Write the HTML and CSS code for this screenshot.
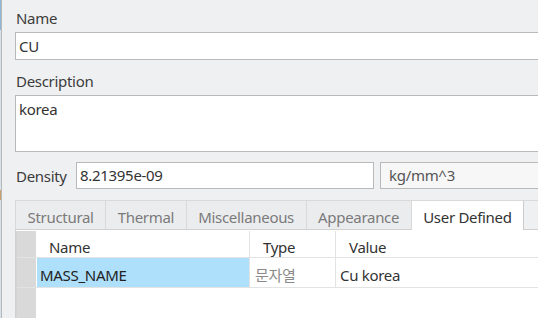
FILE: index.html
```html
<!DOCTYPE html>
<html lang="en">

<head>
  <meta charset="UTF-8">
  <title>Material</title>
  <link rel="stylesheet" href="styles.css">
</head>

<body>

  <div class="window">
    <div class="edge"></div>

    <div class="form">
      <div class="label">Name</div>
      <div class="field name-field">CU</div>

      <div class="label">Description</div>
      <div class="field desc-field">korea</div>

      <div class="density-row">
        <span class="density-label">Density</span>
        <div class="field density-field">8.21395e-09</div>
        <div class="field unit-field">kg/mm^3</div>
      </div>

      <div class="tabs">
        <div class="tab">Structural</div>
        <div class="tab">Thermal</div>
        <div class="tab">Miscellaneous</div>
        <div class="tab">Appearance</div>
        <div class="tab active">User Defined</div>
      </div>

      <div class="tab-body">
        <div class="grid">
          <div class="row head">
            <div class="corner"></div>
            <div class="cell col-name">Name</div>
            <div class="cell col-type">Type</div>
            <div class="cell col-value">Value</div>
          </div>
          <div class="row">
            <div class="corner"></div>
            <div class="cell col-name selected">MASS_NAME</div>
            <div class="cell col-type muted">문자열</div>
            <div class="cell col-value">Cu korea</div>
          </div>
          <div class="row filler">
            <div class="corner"></div>
            <div class="cell"></div>
          </div>
        </div>
      </div>
    </div>
  </div>

</body>

</html>
```

FILE: styles.css
```css
body {
  margin: 0;
  font-family: "Noto Sans", "Noto Sans CJK KR", sans-serif;
  font-size: 15px;
  letter-spacing: -0.3px;
  color: #333;
  background-color: #eff0f2;
}

.window {
  display: flex;
  height: 318px;
  overflow: hidden;
}

.edge {
  width: 1px;
  border-right: 1px solid #b8b8b8;
  background: linear-gradient(#8fb6d6 0 30px, #d7e3ec 30px 190px, #c8a26a 190px 200px, #d7e3ec 200px);
}

.form {
  flex: 1;
  display: flex;
  flex-direction: column;
  padding: 8px 0 0 13px;
  min-width: 0;
}

.label {
  height: 24px;
  line-height: 20px;
  padding-left: 1px;
  color: #3c3c3c;
}

.field {
  box-sizing: border-box;
  border: 1px solid #b9b9b9;
  background-color: #fff;
  padding: 0 3px;
  white-space: nowrap;
}

.name-field {
  height: 28px;
  line-height: 26px;
  margin: 0 -10px 11px 0;
}

.desc-field {
  height: 57px;
  line-height: 24px;
  padding-top: 1px;
  margin: 0 -10px 10px 0;
}

.density-row {
  display: flex;
  align-items: center;
  gap: 6px;
  margin-right: -10px;
}

.density-label {
  width: 54px;
  padding-left: 1px;
  color: #3c3c3c;
}

.density-field {
  width: 298px;
  height: 27px;
  line-height: 25px;
}

.unit-field {
  flex: 1;
  height: 27px;
  line-height: 25px;
  padding-left: 8px;
  background-color: #f7f7f7;
  color: #555;
}

.tabs {
  display: flex;
  box-sizing: border-box;
  height: 30px;
  margin: 11px -10px 0 0;
  border-top: 1px solid #d9d9d9;
  border-left: 1px solid #d9d9d9;
  border-bottom: 1px solid #d0d0d0;
}

.tab {
  box-sizing: border-box;
  height: 28px;
  line-height: 28px;
  padding: 2px 11.5px 0;
  color: #7a7a7a;
  border-right: 1px solid #d9d9d9;
  background-color: #ebecee;
}

.tab.active {
  height: 29px;
  margin-bottom: -1px;
  background-color: #fff;
  color: #333;
  border-right-color: #cccccc;
}

.tab-body {
  flex: 1;
  background-color: #fff;
  border-left: 1px solid #d0d0d0;
  padding-top: 1px;
  margin-right: -10px;
}

.grid {
  display: flex;
  flex-direction: column;
  height: 100%;
  border-left: 1px solid #d4d4d4;
}

.row {
  display: flex;
  height: 29px;
  border-bottom: 1px solid #e3e3e3;
}

.row.head {
  height: 26px;
}

.row.filler {
  flex: 1;
  border-bottom: none;
}

.corner {
  width: 19px;
  background-color: #d9d9d9;
  border-right: 1px solid #fff;
}

.cell {
  box-sizing: border-box;
  padding-top: 3px;
  line-height: 29px;
  white-space: nowrap;
  border-right: 1px solid #e3e3e3;
}

.head .cell {
  padding-top: 0;
  line-height: 33px;
}

.col-name {
  width: 213px;
  padding-left: 3px;
}

.head .col-name {
  padding-left: 12px;
}

.col-type {
  width: 86px;
  padding-left: 5px;
}

.head .col-type {
  padding-left: 13px;
}

.col-value {
  flex: 1;
  padding-left: 4px;
  border-right: none;
}

.head .col-value {
  padding-left: 13px;
}

.selected {
  background-color: #aee0fb;
  color: #222;
}

.muted {
  color: #8a8a8a;
}

.filler .cell {
  border-right: none;
}
```
